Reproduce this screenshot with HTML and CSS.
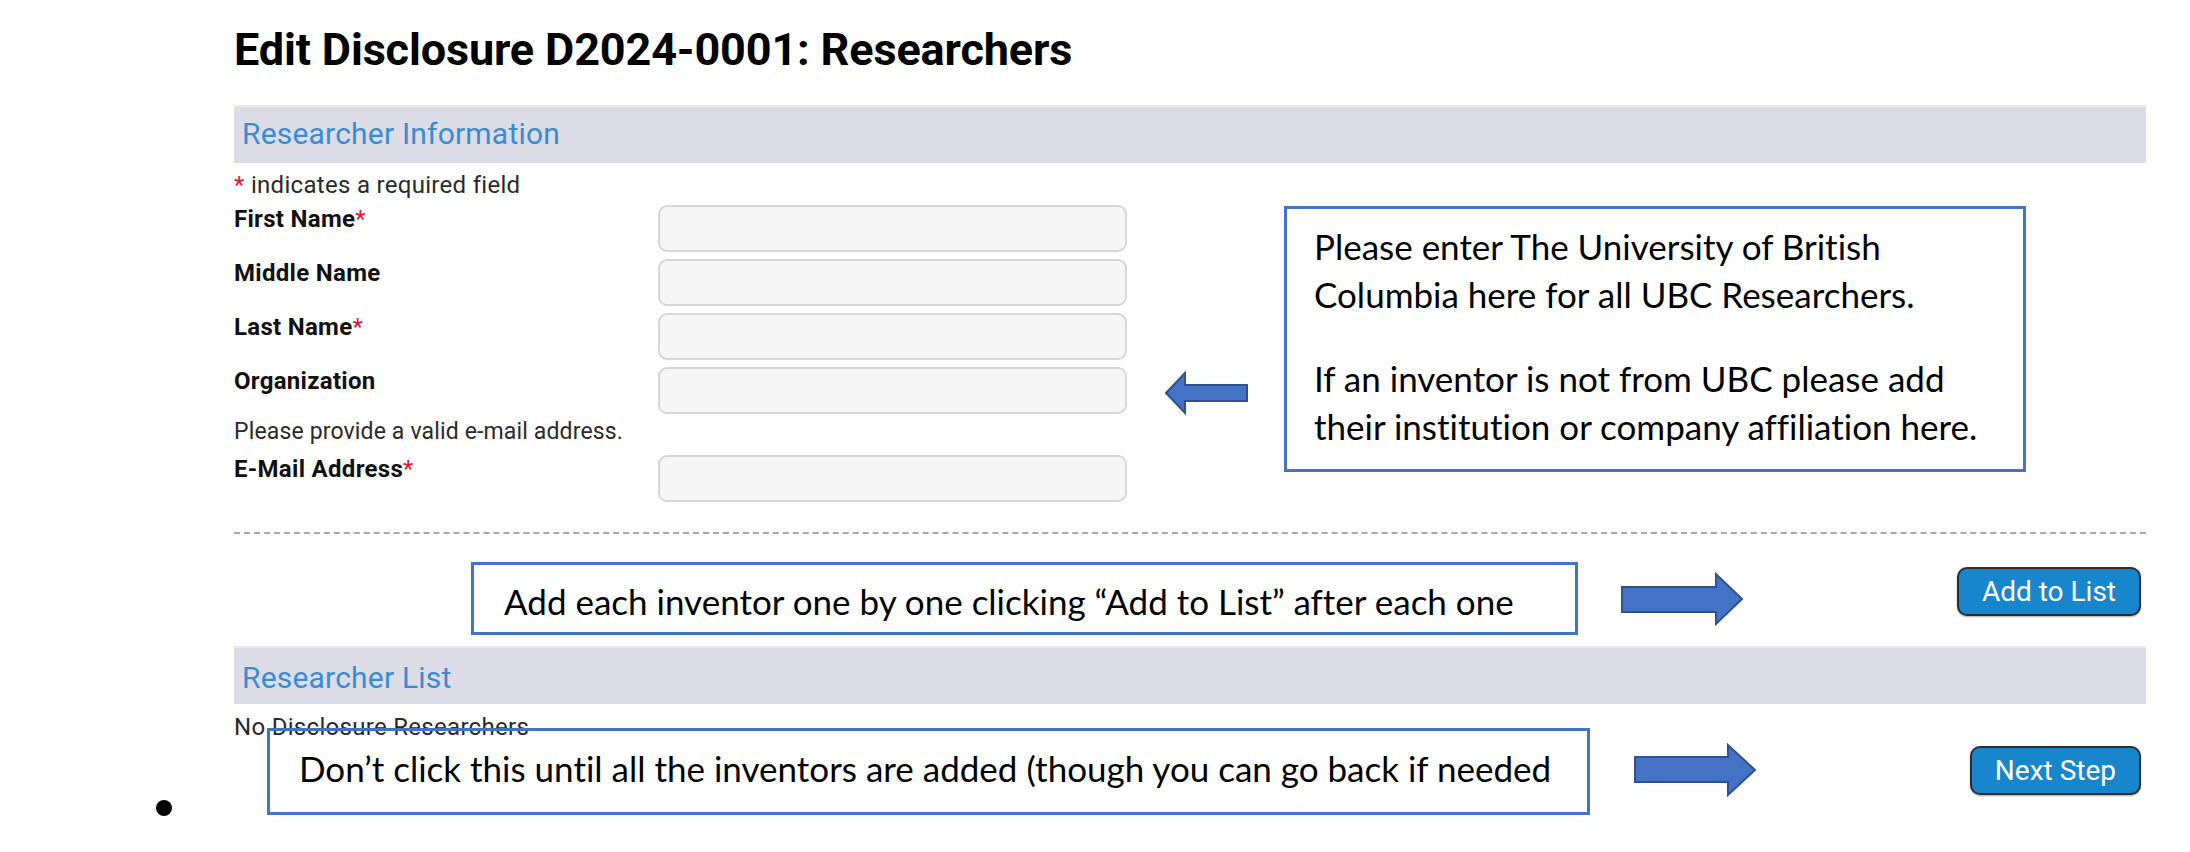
FILE: index.html
```html
<!DOCTYPE html>
<html lang="en">
<head>
<meta charset="utf-8">
<title>Edit Disclosure D2024-0001: Researchers</title>
<link rel="stylesheet" href="styles.css">
</head>
<body>
<div class="doc">
  <main class="page">
    <h1 class="title">Edit Disclosure D2024-0001: Researchers</h1>

    <section class="panel">
      <h2 class="band">Researcher Information</h2>
      <p class="req-note"><span class="req">*</span> indicates a required field</p>
      <div class="form">
        <div class="row">
          <label class="label" for="f-first">First Name<span class="req">*</span></label>
          <input class="field" id="f-first" type="text">
        </div>
        <div class="row">
          <label class="label" for="f-middle">Middle Name</label>
          <input class="field" id="f-middle" type="text">
        </div>
        <div class="row">
          <label class="label" for="f-last">Last Name<span class="req">*</span></label>
          <input class="field" id="f-last" type="text">
        </div>
        <div class="row">
          <label class="label" for="f-org">Organization</label>
          <input class="field" id="f-org" type="text">
        </div>
        <p class="hint">Please provide a valid e-mail address.</p>
        <div class="row row-email">
          <label class="label" for="f-email">E-Mail Address<span class="req">*</span></label>
          <input class="field" id="f-email" type="text">
        </div>
      </div>
      <hr class="divider">
      <div class="actions actions-add">
        <button class="btn" type="button">Add to List</button>
      </div>
    </section>

    <section class="panel">
      <h2 class="band band-list">Researcher List</h2>
      <p class="empty">No Disclosure Researchers</p>
      <div class="actions actions-next">
        <button class="btn" type="button">Next Step</button>
      </div>
    </section>
  </main>

  <div class="bullet-row"><span class="bullet"></span></div>

  <div class="note note-org">
    <p class="note-text">Please enter The University of British<br>Columbia here for all UBC Researchers.</p>
    <p class="note-text">If an inventor is not from UBC please add<br>their institution or company affiliation here.</p>
  </div>
  <svg class="arrow arrow-left" viewBox="0 0 86 44" aria-hidden="true">
    <polygon points="2,22 21,2 21,14 83,14 83,30 21,30 21,42"/>
  </svg>

  <div class="note note-add">
    <p class="note-text">Add each inventor one by one clicking “Add to List” after each one</p>
  </div>
  <svg class="arrow arrow-r1" viewBox="0 0 124 54" aria-hidden="true">
    <polygon points="2,15 96,15 96,2 122,27 96,52 96,40 2,40"/>
  </svg>

  <div class="note note-next">
    <p class="note-text">Don’t click this until all the inventors are added (though you can go back if needed</p>
  </div>
  <svg class="arrow arrow-r2" viewBox="0 0 124 54" aria-hidden="true">
    <polygon points="2,14 95,14 95,2 122,27 95,52 95,39 2,39"/>
  </svg>
</div>
</body>
</html>
```

FILE: styles.css
```css
* { box-sizing: border-box; }

html, body {
  margin: 0;
  padding: 0;
  background: #ffffff;
}

body {
  font-family: Roboto, "Liberation Sans", Arial, sans-serif;
  color: #111111;
  width: 2190px;
  height: 852px;
  overflow: hidden;
}

.doc {
  position: relative;
  width: 2190px;
  height: 852px;
}

.page {
  margin-left: 234px;
  width: 1912px;
  display: flex;
  flex-direction: column;
}

.title {
  margin: 0;
  padding-top: 27px;
  font-size: 45px;
  line-height: 46px;
  font-weight: 700;
  letter-spacing: -0.15px;
  color: #000000;
}

.panel {
  display: flex;
  flex-direction: column;
}

.band {
  margin: 32px 0 0 0;
  height: 58px;
  padding: 0 0 3px 8px;
  border-top: 2px solid #e8e8ee;
  background: #dcdce6;
  font-size: 30px;
  line-height: 53px;
  font-weight: 400;
  letter-spacing: 0.2px;
  color: #3b8bd4;
}

.band-list {
  margin-top: 30px;
  padding-top: 3px;
  padding-bottom: 0;
}

.req-note {
  margin: 9px 0 0 0;
  font-size: 24px;
  line-height: 26px;
  letter-spacing: 0.3px;
  color: #2a2a2a;
}

.req {
  color: #ee1133;
  font-weight: 400;
}

.form {
  display: flex;
  flex-direction: column;
}

.row {
  display: grid;
  grid-template-columns: 424px 469px;
  align-items: start;
  margin-top: 7px;
}

.row-email {
  margin-top: 10px;
}

.label {
  padding-top: 1px;
  font-size: 24px;
  line-height: 26px;
  font-weight: 700;
  letter-spacing: 0.3px;
  color: #111111;
}

.field {
  display: block;
  width: 469px;
  height: 47px;
  margin: 0;
  padding: 0 12px;
  border: 2px solid #d6d6d6;
  border-radius: 9px;
  background: #f5f5f5;
  font: inherit;
  outline: none;
}

.hint {
  margin: 5px 0 0 0;
  font-size: 23px;
  line-height: 26px;
  letter-spacing: 0.15px;
  color: #2a2a2a;
}

.divider {
  margin: 30px 0 0 0;
  height: 0;
  border: 0;
  border-top: 2px dashed #a8a8a8;
}

.actions {
  display: flex;
  justify-content: flex-end;
  padding-right: 5px;
}

.actions-add {
  margin-top: 33px;
}

.empty {
  margin: 10px 0 0 0;
  font-size: 24px;
  line-height: 26px;
  letter-spacing: 0.3px;
  color: #2a2a2a;
}

.actions-next {
  margin-top: 6px;
}

.btn {
  height: 49px;
  margin: 0;
  padding: 0 23px;
  border: 2px solid #2e2e2e;
  border-radius: 10px;
  background: #1886cc;
  color: #ffffff;
  font-family: Roboto, "Liberation Sans", Arial, sans-serif;
  font-size: 28px;
  line-height: 45px;
  font-weight: 400;
  box-shadow: 0 1px 2px rgba(0, 0, 0, 0.35);
}

.bullet-row {
  margin-top: 5px;
  padding-left: 156px;
  display: flex;
}

.bullet {
  width: 16px;
  height: 16px;
  border-radius: 50%;
  background: #000000;
}

/* annotation callouts laid over the page */
.note {
  position: absolute;
  border: 3px solid #4472c4;
  background: transparent;
  font-family: Lato, Carlito, "Open Sans", sans-serif;
  font-variant-ligatures: none;
  font-feature-settings: "liga" 0, "dlig" 0;
  color: #000000;
}

.note-text {
  margin: 0;
  white-space: nowrap;
  font-size: 35px;
}

.note-org {
  left: 1284px;
  top: 206px;
  width: 742px;
  height: 266px;
  padding: 13px 0 0 27px;
  background: #ffffff;
}

.note-org .note-text {
  line-height: 48px;
}

.note-org .note-text + .note-text {
  margin-top: 36px;
}

.note-add {
  left: 471px;
  top: 562px;
  width: 1107px;
  height: 73px;
  padding: 16px 0 0 30px;
  background: #ffffff;
}

.note-add .note-text {
  line-height: 40px;
}

.note-next {
  left: 267px;
  top: 728px;
  width: 1323px;
  height: 87px;
  padding: 17px 0 0 29px;
}

.note-next .note-text {
  line-height: 40px;
}

.arrow {
  position: absolute;
  overflow: visible;
}

.arrow polygon {
  fill: #4472c4;
  stroke: #2f528f;
  stroke-width: 2;
  stroke-linejoin: miter;
}

.arrow-left {
  left: 1164px;
  top: 371px;
  width: 86px;
  height: 44px;
}

.arrow-r1 {
  left: 1620px;
  top: 572px;
  width: 124px;
  height: 54px;
}

.arrow-r2 {
  left: 1633px;
  top: 743px;
  width: 124px;
  height: 54px;
}
```
